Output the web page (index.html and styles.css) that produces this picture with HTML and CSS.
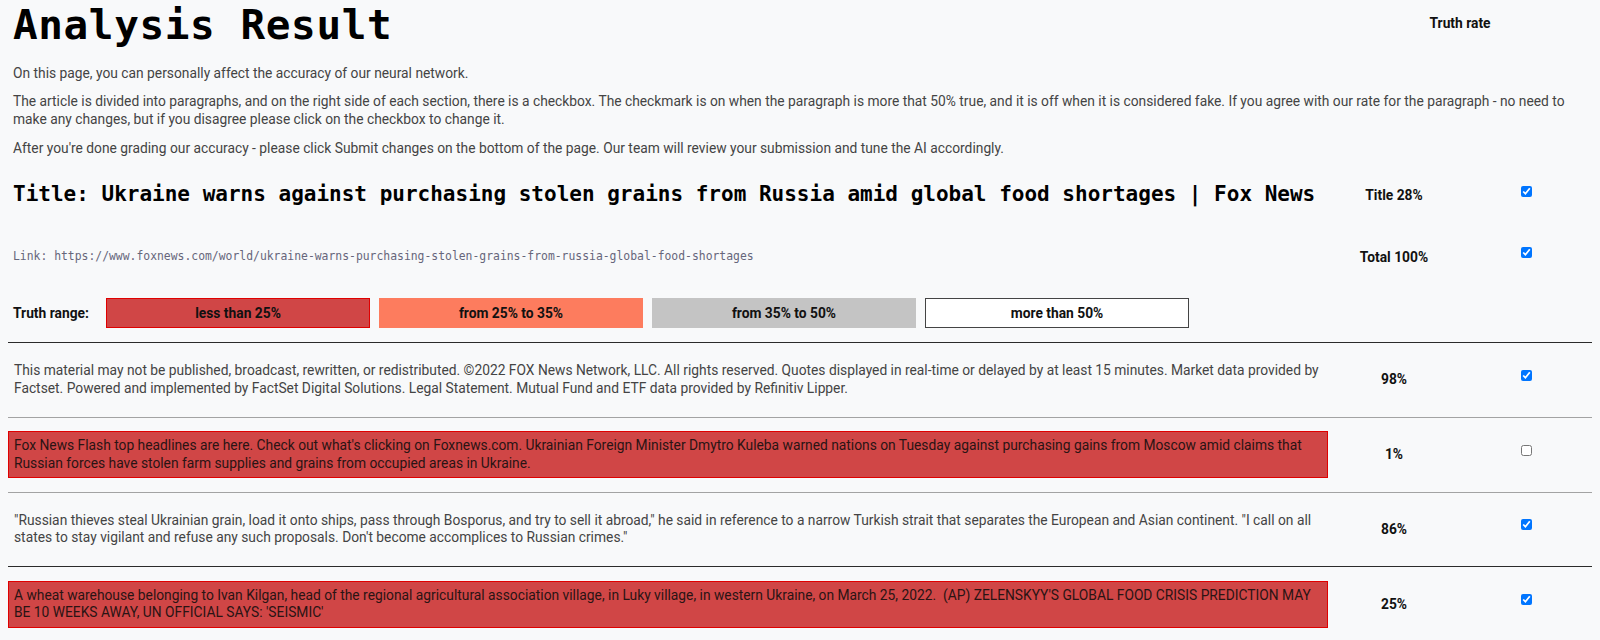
FILE: index.html
```html
<!DOCTYPE html>
<html lang="en">

<head>
    <meta charset="UTF-8">
    <meta name="viewport" content="width=device-width, initial-scale=1.0">
    <title>Analysis Result</title>
    <link rel="stylesheet" href="styles.css">
</head>

<body>
    <div class="page">
        <div class="head">
            <h1>Analysis Result</h1>
            <div class="rate-head">Truth rate</div>
        </div>
        <div class="intro">
            <p>On this page, you can personally affect the accuracy of our neural network.</p>
            <p>The article is divided into paragraphs, and on the right side of each section, there is a checkbox. The checkmark is on when the paragraph is more that 50% true, and it is off when it is considered fake. If you agree with our rate for the paragraph - no need to make any changes, but if you disagree please click on the checkbox to change it.</p>
            <p>After you're done grading our accuracy - please click Submit changes on the bottom of the page. Our team will review your submission and tune the AI accordingly.</p>
        </div>

        <div class="meta title-row">
            <h2 class="title">Title: Ukraine warns against purchasing stolen grains from Russia amid global food shortages | Fox News</h2>
            <div class="rate">Title 28%</div>
            <div class="check"><input type="checkbox" checked></div>
        </div>
        <div class="meta link-row">
            <div class="link">Link: https://www.foxnews.com/world/ukraine-warns-purchasing-stolen-grains-from-russia-global-food-shortages</div>
            <div class="rate">Total 100%</div>
            <div class="check"><input type="checkbox" checked></div>
        </div>

        <div class="range">
            <span class="range-label">Truth range:</span>
            <div class="range-box low">less than 25%</div>
            <div class="range-box mid">from 25% to 35%</div>
            <div class="range-box high">from 35% to 50%</div>
            <div class="range-box true">more than 50%</div>
        </div>

        <div class="item">
            <p class="para">This material may not be published, broadcast, rewritten, or redistributed. ©2022 FOX News Network, LLC. All rights reserved. Quotes displayed in real-time or delayed by at least 15 minutes. Market data provided by Factset. Powered and implemented by FactSet Digital Solutions. Legal Statement. Mutual Fund and ETF data provided by Refinitiv Lipper.</p>
            <div class="rate">98%</div>
            <div class="check"><input type="checkbox" checked></div>
        </div>
        <div class="item soft">
            <p class="para fake">Fox News Flash top headlines are here. Check out what's clicking on Foxnews.com. Ukrainian Foreign Minister Dmytro Kuleba warned nations on Tuesday against purchasing gains from Moscow amid claims that Russian forces have stolen farm supplies and grains from occupied areas in Ukraine.</p>
            <div class="rate">1%</div>
            <div class="check"><input type="checkbox"></div>
        </div>
        <div class="item soft">
            <p class="para">"Russian thieves steal Ukrainian grain, load it onto ships, pass through Bosporus, and try to sell it abroad," he said in reference to a narrow Turkish strait that separates the European and Asian continent. "I call on all states to stay vigilant and refuse any such proposals. Don't become accomplices to Russian crimes."</p>
            <div class="rate">86%</div>
            <div class="check"><input type="checkbox" checked></div>
        </div>
        <div class="item">
            <p class="para fake">A wheat warehouse belonging to Ivan Kilgan, head of the regional agricultural association village, in Luky village, in western Ukraine, on March 25, 2022.&nbsp; (AP) ZELENSKYY'S GLOBAL FOOD CRISIS PREDICTION MAY BE 10 WEEKS AWAY, UN OFFICIAL SAYS: 'SEISMIC'</p>
            <div class="rate">25%</div>
            <div class="check"><input type="checkbox" checked></div>
        </div>
    </div>
</body>

</html>
```

FILE: styles.css
```css
* {
    box-sizing: border-box;
}
body {
    margin: 0;
    background-color: #f8f9fa;
    color: #444;
    font-family: Roboto, "Liberation Sans", sans-serif;
    font-size: 13.8px;
}
.page {
    padding: 0 8px;
}
.head,
.meta,
.item {
    display: grid;
    grid-template-columns: 1fr 132px 132px;
}
.head h1 {
    margin: 1px 0 0;
    padding-left: 5px;
    font-family: "DejaVu Sans Mono", monospace;
    font-size: 41px;
    line-height: 48px;
    letter-spacing: 0.6px;
    color: #000;
}
.head .rate-head {
    grid-column: span 2;
    padding-top: 15px;
    text-align: center;
    font-weight: bold;
    color: #111;
}
.intro {
    margin-top: 15.6px;
    padding: 0 5px;
}
.intro p {
    margin: 0 0 11.4px;
    line-height: 17.4px;
}

/* title and link */
.meta {
    align-items: start;
}
.title-row {
    margin-top: 29px;
}
.title-row .title {
    margin: -5px 0 0;
    padding-left: 5px;
    font-family: "DejaVu Sans Mono", monospace;
    font-size: 21px;
    line-height: 26px;
    color: #000;
}
.link-row {
    margin-top: 40.5px;
}
.link-row .link {
    padding-left: 5px;
    font-family: "DejaVu Sans Mono", monospace;
    font-size: 11.4px;
    line-height: 17.4px;
    color: #66667a;
}
.meta .rate {
    padding-top: 1px;
}
.rate {
    text-align: center;
    font-weight: bold;
    line-height: 17.4px;
    color: #111;
}
.check {
    display: flex;
    justify-content: center;
}
.check input {
    width: 11px;
    height: 11px;
    margin: 0;
}
.link-row .check input {
    margin-top: -1px;
}

/* truth range */
.range {
    display: flex;
    align-items: center;
    gap: 9px;
    margin: 32px 0 14px;
    padding-left: 5px;
}
.range-label {
    width: 84px;
    font-weight: bold;
    color: #111;
}
.range-box {
    width: 264px;
    height: 30px;
    line-height: 28px;
    text-align: center;
    font-weight: bold;
    color: #111;
    border: 1px solid;
}
.range-box.low {
    background-color: #d04646;
    border-color: #e00000;
}
.range-box.mid {
    background-color: #fd7c5e;
    border-color: #fd7c5e;
}
.range-box.high {
    background-color: #c4c4c4;
    border-color: #c4c4c4;
}
.range-box.true {
    background-color: #fff;
    border-color: #444;
}

/* paragraphs */
.item {
    align-items: center;
    border-top: 1px solid #2b2b2b;
}
.item.soft {
    border-top-color: #a3a3a3;
}
.item .para {
    margin: 13.5px 0;
    padding: 5px;
    border: 1px solid transparent;
    line-height: 17.4px;
}
.item .para.fake {
    background-color: #d04646;
    border-color: #e00000;
    color: #2a1414;
}
.item .check input {
    margin-bottom: 9px;
}
```
